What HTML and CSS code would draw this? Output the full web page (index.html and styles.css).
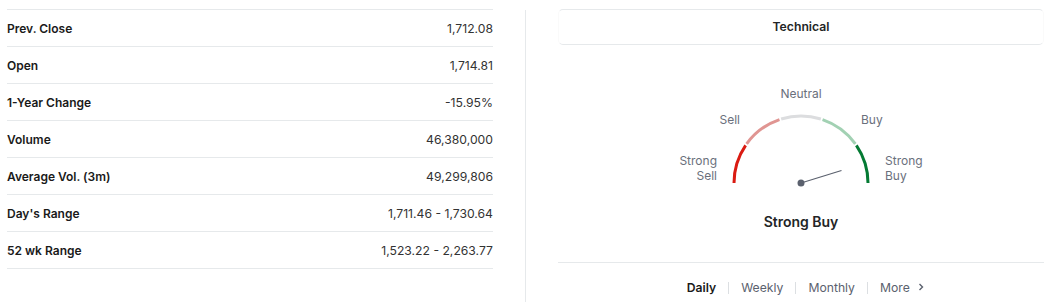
FILE: index.html
```html
<!DOCTYPE html>
<html lang="en">
<head>
    <meta charset="UTF-8">
    <title>Stock Overview</title>
    <link rel="stylesheet" href="styles.css">
</head>
<body>
    <div class="page">
        <div class="stats">
            <div class="row"><span class="label">Prev. Close</span><span class="value">1,712.08</span></div>
            <div class="row"><span class="label">Open</span><span class="value">1,714.81</span></div>
            <div class="row"><span class="label">1-Year Change</span><span class="value">-15.95%</span></div>
            <div class="row"><span class="label">Volume</span><span class="value">46,380,000</span></div>
            <div class="row"><span class="label">Average Vol. (3m)</span><span class="value">49,299,806</span></div>
            <div class="row"><span class="label">Day's Range</span><span class="value">1,711.46 - 1,730.64</span></div>
            <div class="row"><span class="label">52 wk Range</span><span class="value">1,523.22 - 2,263.77</span></div>
        </div>

        <div class="divider"></div>

        <div class="technical">
            <div class="tech-header">Technical</div>

            <svg class="gauge" width="486" height="217" viewBox="0 0 486 217">
                <!-- arc segments, centre 243,138 r=67 -->
                <path d="M 176 138 A 67 67 0 0 1 187.62 100.29" stroke="#da1b12" />
                <path d="M 188.62 98.86 A 67 67 0 0 1 221.47 74.56" stroke="#e09592" />
                <path d="M 223.13 74.02 A 67 67 0 0 1 262.87 74.02" stroke="#dcdddf" />
                <path d="M 264.53 74.56 A 67 67 0 0 1 297.38 98.86" stroke="#a2d1b3" />
                <path d="M 298.38 100.29 A 67 67 0 0 1 310 138" stroke="#047a33" />

                <line x1="243" y1="138" x2="283.5" y2="125.5" class="needle" />
                <circle cx="243" cy="138" r="3.5" fill="#5b616e" />

                <text x="243" y="53" text-anchor="middle" class="tick">Neutral</text>
                <text x="182" y="79" text-anchor="end" class="tick">Sell</text>
                <text x="303" y="79" class="tick">Buy</text>
                <text x="159" y="120" text-anchor="end" class="tick">Strong</text>
                <text x="159" y="135" text-anchor="end" class="tick">Sell</text>
                <text x="327" y="120" class="tick">Strong</text>
                <text x="327" y="135" class="tick">Buy</text>

                <text x="243" y="182" text-anchor="middle" class="result">Strong Buy</text>
            </svg>

            <div class="tabs">
                <span class="tab active">Daily</span>
                <span class="sep"></span>
                <span class="tab">Weekly</span>
                <span class="sep"></span>
                <span class="tab">Monthly</span>
                <span class="sep"></span>
                <span class="tab">More
                    <svg class="chevron" width="8" height="10" viewBox="0 0 8 10"><path d="M2.5 2 L5.5 5 L2.5 8" /></svg>
                </span>
            </div>
        </div>
    </div>
</body>
</html>
```

FILE: styles.css
```css
body {
    margin: 0;
    font-family: Inter, "Noto Sans", sans-serif;
    background: #fff;
    color: #1a1a1a;
}

.page {
    display: flex;
    padding: 9px 0 0 7px;
    height: 293px;
}

.stats {
    width: 486px;
}

.row {
    display: flex;
    justify-content: space-between;
    align-items: center;
    height: 36px;
    border-top: 1px solid #e6e9eb;
}

.row:last-child {
    border-bottom: 1px solid #e6e9eb;
}

.label {
    font-size: 12px;
    font-weight: 600;
    color: #1a1a1a;
}

.value {
    font-size: 12.2px;
    color: #333;
}

.divider {
    width: 1px;
    margin: 1px 32px 0 32px;
    background: #e6e9eb;
}

.technical {
    width: 486px;
    display: flex;
    flex-direction: column;
}

.tech-header {
    height: 34px;
    line-height: 34px;
    text-align: center;
    font-size: 12.2px;
    font-weight: 600;
    color: #232526;
    border: 1px solid #e6e9eb;
    border-left-color: #fafafa;
    border-right-color: #fafafa;
    border-radius: 5px;
}

.gauge {
    display: block;
}

.gauge path {
    fill: none;
    stroke-width: 3;
}

.needle {
    stroke: #5b616e;
    stroke-width: 1.2;
}

.tick {
    font-family: Inter, sans-serif;
    font-size: 12px;
    fill: #6a707c;
}

.result {
    font-family: Inter, sans-serif;
    font-size: 14px;
    font-weight: 600;
    fill: #232526;
}

.tabs {
    display: flex;
    justify-content: center;
    align-items: center;
    gap: 12px;
    border-top: 1px solid #e6e9eb;
    padding: 17px 0 0 10px;
    font-size: 12.2px;
    color: #5b616e;
}

.tab.active {
    color: #1a1a1a;
    font-weight: 600;
}

.sep {
    width: 1px;
    height: 12px;
    background: #dcdfe2;
}

.chevron {
    margin-left: 4px;
}

.chevron path {
    fill: none;
    stroke: #5b616e;
    stroke-width: 1.4;
}
```
